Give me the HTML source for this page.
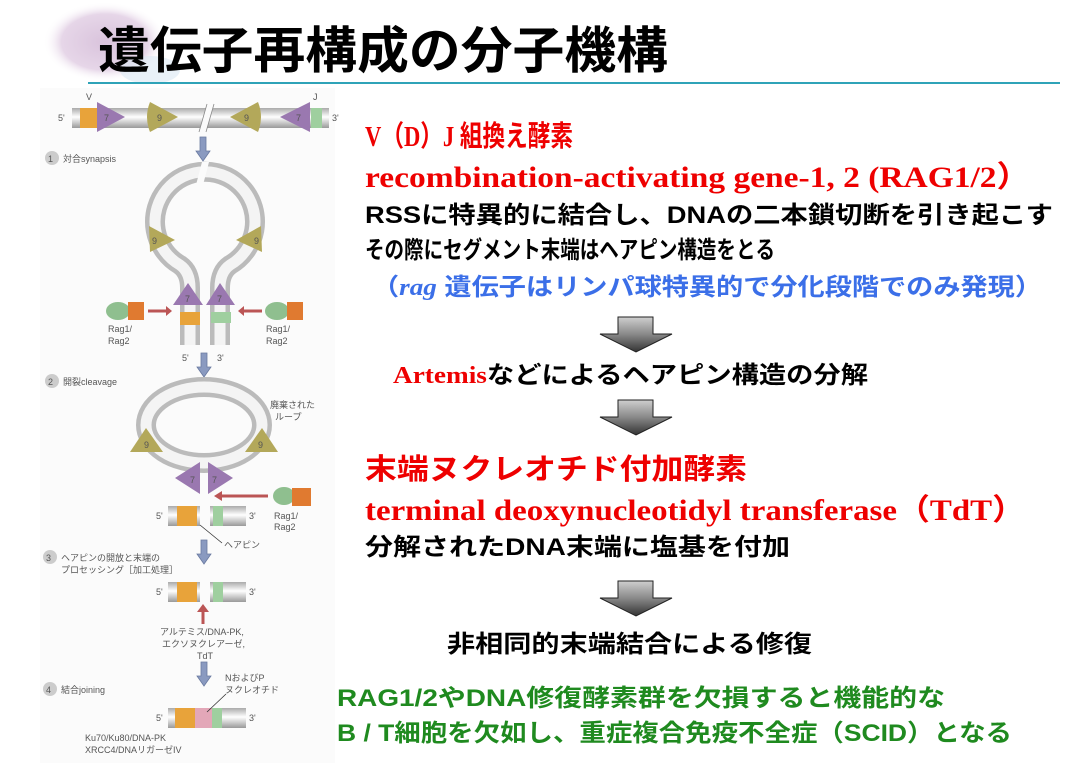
<!DOCTYPE html>
<html><head><meta charset="utf-8"><style>
html,body{margin:0;padding:0;background:#fff;}
svg{display:block}
.j{font-family:"Liberation Sans","Noto Sans CJK JP",sans-serif;font-weight:bold}
.s{font-family:"Liberation Serif","Noto Sans CJK JP",serif;font-weight:bold}
.d{font-family:"Liberation Sans","Noto Sans CJK JP",sans-serif;fill:#555}
</style></head><body>
<svg width="1081" height="767" viewBox="0 0 1081 767" xmlns="http://www.w3.org/2000/svg">
<defs>
<linearGradient id="ar" x1="0" y1="0" x2="0" y2="1"><stop offset="0" stop-color="#cfcfcf"/><stop offset=".5" stop-color="#888"/><stop offset="1" stop-color="#333"/></linearGradient>
<linearGradient id="rod" x1="0" y1="0" x2="0" y2="1"><stop offset="0" stop-color="#aaa"/><stop offset=".45" stop-color="#fff"/><stop offset="1" stop-color="#999"/></linearGradient>
<radialGradient id="blob" cx=".5" cy=".5" r=".5"><stop offset="0" stop-color="#d9c3dc"/><stop offset=".7" stop-color="#e6d6e8"/><stop offset="1" stop-color="#fff" stop-opacity="0"/></radialGradient>
<g id="arrow"><path d="M18 0H53V17H72L36 35L0 17H18Z" fill="url(#ar)" stroke="#222" stroke-width="1"/></g>
<g id="barrow"><path d="M-3 0H3V14H7L0 24L-7 14H-3Z" fill="#8a9ac0" stroke="#6a7aa0" stroke-width=".8"/></g>
</defs>
<ellipse cx="105" cy="42" rx="62" ry="40" fill="url(#blob)"/>
<ellipse cx="150" cy="70" rx="30" ry="14" fill="#dbe8f3" opacity=".6"/>
<rect x="40" y="88" width="295" height="675" fill="#fbfbfb"/>
<text x="98" y="68" class="j" font-size="50" textLength="570" lengthAdjust="spacingAndGlyphs" fill="#000">遺伝子再構成の分子機構</text>
<rect x="88" y="82" width="972" height="2" fill="#2fa3b8"/>

<text x="365" y="146" class="s" font-size="29" fill="#e00" textLength="208" lengthAdjust="spacingAndGlyphs">V（D）J 組換え酵素</text>
<text x="365" y="187" class="s" font-size="30" fill="#e00" textLength="665" lengthAdjust="spacingAndGlyphs">recombination-activating gene-1, 2 (RAG1/2）</text>
<text x="365" y="223" class="j" font-size="24" fill="#000" textLength="688" lengthAdjust="spacingAndGlyphs">RSSに特異的に結合し、DNAの二本鎖切断を引き起こす</text>
<text x="365" y="258" class="j" font-size="24" fill="#000" textLength="410" lengthAdjust="spacingAndGlyphs">その際にセグメント末端はヘアピン構造をとる</text>
<text x="372" y="295" class="j" font-size="24" fill="#3b6fe8" textLength="670" lengthAdjust="spacingAndGlyphs">（<tspan font-family="Liberation Serif" font-style="italic">rag</tspan> 遺伝子はリンパ球特異的で分化段階でのみ発現）</text>
<use href="#arrow" x="600" y="317"/>
<text x="393" y="383" class="j" font-size="24" fill="#000" textLength="475" lengthAdjust="spacingAndGlyphs"><tspan class="s" fill="#e00">Artemis</tspan>などによるヘアピン構造の分解</text>
<use href="#arrow" x="600" y="400"/>
<text x="365" y="479" class="j" font-size="29" fill="#e00" textLength="382" lengthAdjust="spacingAndGlyphs">末端ヌクレオチド付加酵素</text>
<text x="365" y="520" class="s" font-size="30" fill="#e00" textLength="660" lengthAdjust="spacingAndGlyphs">terminal deoxynucleotidyl transferase（TdT）</text>
<text x="365" y="555" class="j" font-size="24" fill="#000" textLength="425" lengthAdjust="spacingAndGlyphs">分解されたDNA末端に塩基を付加</text>
<use href="#arrow" x="600" y="581"/>
<text x="447" y="652" class="j" font-size="24" fill="#000" textLength="365" lengthAdjust="spacingAndGlyphs">非相同的末端結合による修復</text>
<text x="337" y="706" class="j" font-size="24" fill="#1f8a1f" textLength="608" lengthAdjust="spacingAndGlyphs">RAG1/2やDNA修復酵素群を欠損すると機能的な</text>
<text x="337" y="741" class="j" font-size="24" fill="#1f8a1f" textLength="675" lengthAdjust="spacingAndGlyphs">B / T細胞を欠如し、重症複合免疫不全症（SCID）となる</text>

<g font-size="9">
<text x="86" y="100" class="d">V</text><text x="313" y="100" class="d">J</text>
<text x="58" y="121" class="d">5'</text><text x="332" y="121" class="d">3'</text>
<rect x="72" y="108" width="257" height="20" fill="url(#rod)"/>
<rect x="80" y="108" width="17" height="20" fill="#e8a33a"/>
<rect x="311" y="108" width="11" height="20" fill="#9fcf9f"/>
<path d="M207 104L214 104L206 132L199 132Z" fill="#fbfbfb"/>
<path d="M207 104L199 132M214 104L206 132" stroke="#888" stroke-width=".8"/>
<path d="M97 102L125 117L97 132Z" fill="#9a78b0"/><text x="104" y="121" class="d">7</text>
<path d="M150 102L178 117L150 132Q144 117 150 102Z" fill="#b3a85a"/><text x="157" y="121" class="d">9</text>
<path d="M258 102L230 117L258 132Q264 117 258 102Z" fill="#b3a85a"/><text x="244" y="121" class="d">9</text>
<path d="M310 102L280 117L310 132Z" fill="#9a78b0"/><text x="296" y="121" class="d">7</text>
<use href="#barrow" x="203" y="137"/>
<circle cx="52" cy="158" r="7" fill="#ccc"/><text x="48" y="162" class="d">1</text>
<text x="63" y="162" class="d">対合synapsis</text>
<path d="M190 345V288Q190 272 180 265A50 50 0 1 1 230 265Q220 272 220 288V345" fill="none" stroke="#bbb" stroke-width="20"/>
<path d="M190 345V288Q190 272 180 265A50 50 0 1 1 230 265Q220 272 220 288V345" fill="none" stroke="#f4f4f4" stroke-width="11"/>
<path d="M202 162L209 162L203 185L196 185Z" fill="#fbfbfb"/>
<path d="M149 226L175 240L150 252Z" fill="#b3a85a"/><text x="152" y="244" class="d">9</text>
<path d="M261 226L236 240L262 252Z" fill="#b3a85a"/><text x="254" y="244" class="d">9</text>
<rect x="180" y="312" width="20" height="13" fill="#e8a33a"/><rect x="211" y="312" width="20" height="11" fill="#9fcf9f"/>
<path d="M188 283L203 305H173Z" fill="#9a78b0"/><path d="M220 283L235 305H206Z" fill="#9a78b0"/>
<text x="185" y="302" class="d">7</text><text x="217" y="302" class="d">7</text>
<ellipse cx="118" cy="311" rx="12" ry="9" fill="#8fbf8f"/><rect x="128" y="302" width="16" height="18" fill="#e07a30"/>
<ellipse cx="277" cy="311" rx="12" ry="9" fill="#8fbf8f"/><rect x="287" y="302" width="16" height="18" fill="#e07a30"/>
<path d="M148 311H166" stroke="#b55" stroke-width="3"/><path d="M166 306L172 311L166 316Z" fill="#b55"/>
<path d="M262 311H244" stroke="#b55" stroke-width="3"/><path d="M244 306L238 311L244 316Z" fill="#b55"/>
<text x="108" y="332" class="d">Rag1/</text><text x="108" y="344" class="d">Rag2</text>
<text x="266" y="332" class="d">Rag1/</text><text x="266" y="344" class="d">Rag2</text>
<text x="182" y="361" class="d">5'</text><text x="217" y="361" class="d">3'</text>
<use href="#barrow" x="204" y="353"/>
<circle cx="52" cy="381" r="7" fill="#ccc"/><text x="48" y="385" class="d">2</text>
<text x="63" y="385" class="d">開裂cleavage</text>
<ellipse cx="204" cy="425" rx="58" ry="38" fill="none" stroke="#bbb" stroke-width="20"/>
<ellipse cx="204" cy="425" rx="58" ry="38" fill="none" stroke="#f4f4f4" stroke-width="11"/>
<path d="M146 428L163 452H130Z" fill="#b3a85a"/><text x="144" y="448" class="d">9</text>
<path d="M262 428L278 452H245Z" fill="#b3a85a"/><text x="258" y="448" class="d">9</text>
<path d="M200 462V494L175 478Z" fill="#9a78b0"/><path d="M208 462V494L233 478Z" fill="#9a78b0"/>
<text x="190" y="483" class="d">7</text><text x="212" y="483" class="d">7</text>
<text x="270" y="408" class="d">廃棄された</text><text x="275" y="420" class="d">ループ</text>
<path d="M220 496H268" stroke="#b55" stroke-width="3"/><path d="M222 491L214 496L222 501Z" fill="#b55"/>
<ellipse cx="284" cy="496" rx="11" ry="9" fill="#8fbf8f"/><rect x="292" y="488" width="19" height="18" fill="#e07a30"/>
<text x="274" y="519" class="d">Rag1/</text><text x="274" y="530" class="d">Rag2</text>
<rect x="168" y="506" width="32" height="20" fill="url(#rod)"/><rect x="177" y="506" width="20" height="20" fill="#e8a33a"/>
<rect x="210" y="506" width="36" height="20" fill="url(#rod)"/><rect x="213" y="506" width="10" height="20" fill="#9fcf9f"/>
<text x="156" y="519" class="d">5'</text><text x="249" y="519" class="d">3'</text>
<path d="M200 525L222 543" stroke="#333" stroke-width=".8"/><text x="224" y="548" class="d">ヘアピン</text>
<use href="#barrow" x="204" y="540"/>
<circle cx="50" cy="557" r="7" fill="#ccc"/><text x="46" y="561" class="d">3</text>
<text x="61" y="561" class="d">ヘアピンの開放と末端の</text><text x="61" y="573" class="d">プロセッシング［加工処理］</text>
<rect x="168" y="582" width="32" height="20" fill="url(#rod)"/><rect x="177" y="582" width="20" height="20" fill="#e8a33a"/>
<rect x="210" y="582" width="36" height="20" fill="url(#rod)"/><rect x="213" y="582" width="10" height="20" fill="#9fcf9f"/>
<text x="156" y="595" class="d">5'</text><text x="249" y="595" class="d">3'</text>
<path d="M203 624V610" stroke="#b55" stroke-width="3"/><path d="M197 612L203 604L209 612Z" fill="#b55"/>
<text x="160" y="635" class="d">アルテミス/DNA-PK,</text><text x="162" y="647" class="d">エクソヌクレアーゼ,</text><text x="197" y="659" class="d">TdT</text>
<use href="#barrow" x="204" y="662"/>
<text x="225" y="681" class="d">NおよびP</text><text x="225" y="693" class="d">ヌクレオチド</text>
<circle cx="50" cy="689" r="7" fill="#ccc"/><text x="46" y="693" class="d">4</text>
<text x="61" y="693" class="d">結合joining</text>
<rect x="168" y="708" width="78" height="20" fill="url(#rod)"/>
<rect x="175" y="708" width="20" height="20" fill="#e8a33a"/><rect x="195" y="708" width="17" height="20" fill="#e3a7b8"/><rect x="212" y="708" width="10" height="20" fill="#9fcf9f"/>
<path d="M207 712L226 694" stroke="#333" stroke-width=".8"/>
<text x="156" y="721" class="d">5'</text><text x="249" y="721" class="d">3'</text>
<text x="85" y="741" class="d">Ku70/Ku80/DNA-PK</text><text x="85" y="753" class="d">XRCC4/DNAリガーゼIV</text>
</g>
</svg>
</body></html>
